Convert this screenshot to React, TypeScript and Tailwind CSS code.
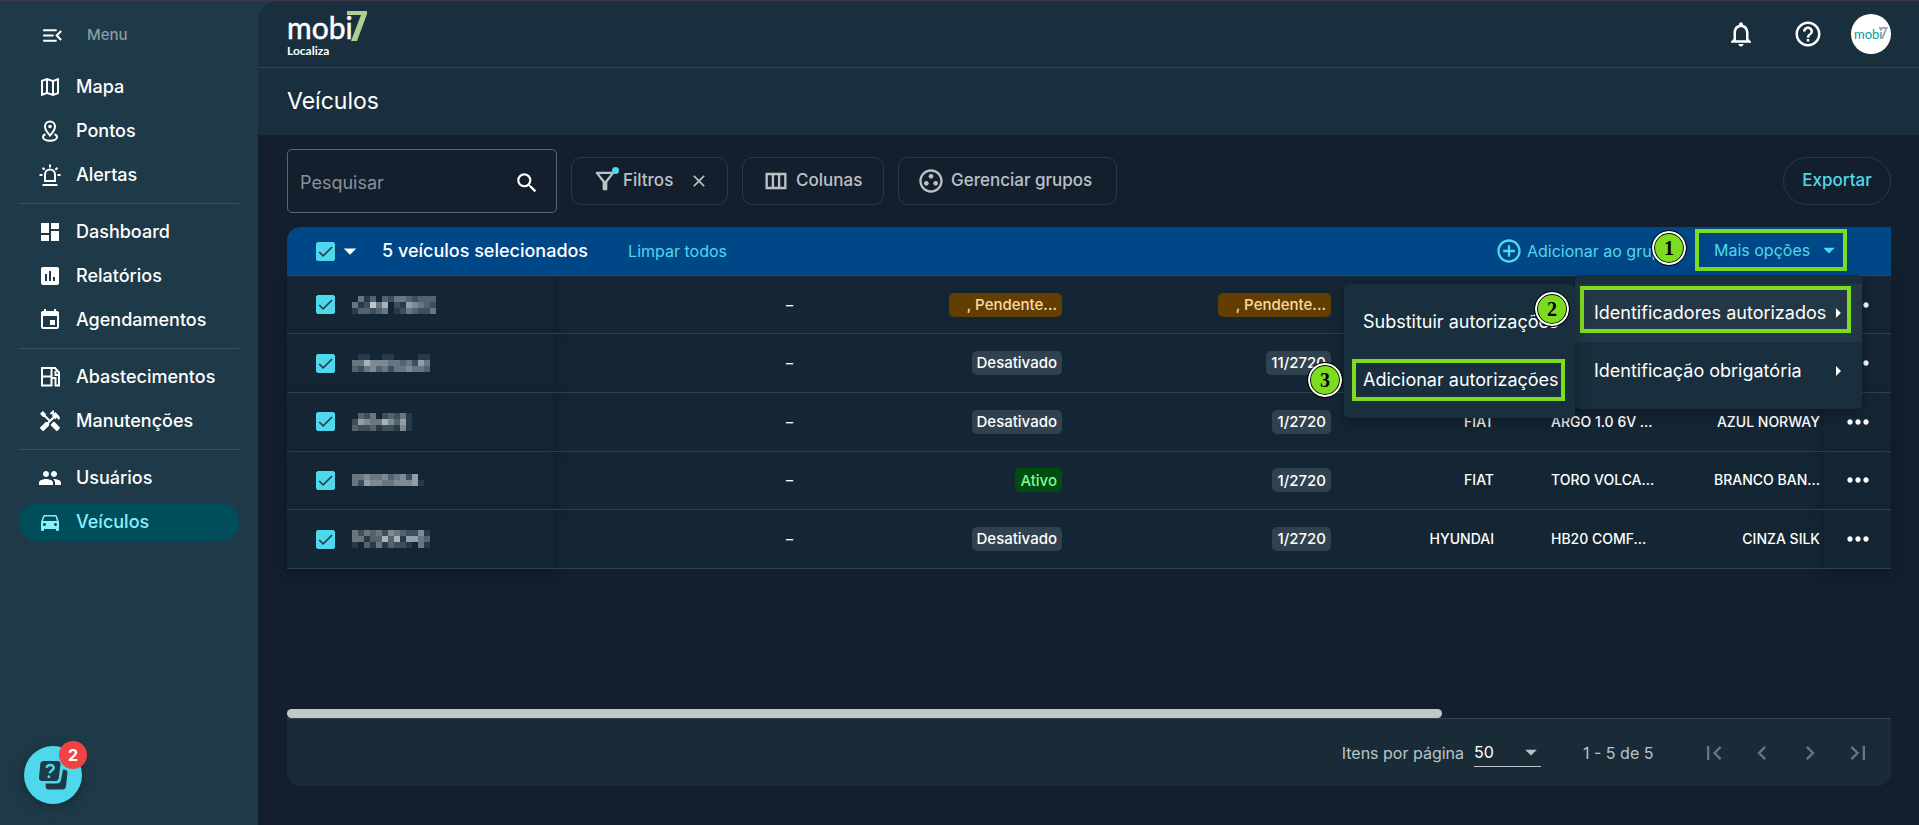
import { useState, type ReactNode } from 'react'
import type { IconType } from 'react-icons'
import {
  MdAddCircleOutline, MdArrowDropDown, MdArrowRight, MdCheck, MdChevronLeft, MdChevronRight, MdClose,
  MdDashboard, MdDirectionsCar, MdEvent, MdFirstPage, MdHandyman, MdHelpOutline, MdInsertChart, MdLastPage,
  MdMenuOpen, MdMoreHoriz, MdNotificationsNone, MdOutlineFilterAlt, MdOutlineGroupWork, MdOutlineMap,
  MdOutlineViewColumn, MdPeople, MdSearch,
} from 'react-icons/md'

type Icon = IconType | (() => ReactNode)

function PinIcon() {
  return (
    <svg viewBox="0 0 24 24" className="size-6" fill="none" stroke="currentColor" strokeWidth="2">
      <path d="M12 16.5C8.8 13 7 10.300 7 7.500a5 5 0 0 1 10 0c0 2.800-1.800 5.500-5 9Z" />
      <circle cx="12" cy="7.500" r="1.800" fill="currentColor" stroke="none" />
      <path d="M7.500 15.200C5.800 15.800 5 16.600 5 18c0 2.200 3 3.800 7 3.800s7-1.600 7-3.800c0-1.400-.8-2.200-2.500-2.800" />
    </svg>
  )
}

function SirenIcon() {
  return (
    <svg viewBox="0 0 24 24" className="size-6" fill="none" stroke="currentColor" strokeWidth="2">
      <path d="M7 18v-6.500a5 5 0 0 1 10 0V18ZM4.500 22h15M12 1.500v3M1.500 12h3M19.500 12h3M4.600 4.800l2 2M19.400 4.800l-2 2" />
    </svg>
  )
}

function FuelIcon() {
  return (
    <svg viewBox="0 0 24 24" className="size-6" fill="none" stroke="currentColor" strokeWidth="2">
      <path d="M4 3h9.500v17.500H4ZM4 11.500h9.500M13.500 3h3.500L21 7.500v13h-3.500V13h-4M17.500 6v4h3" />
    </svg>
  )
}

const NAV: { label: string; icon: Icon; active?: boolean }[][] = [
  [
    { label: 'Mapa', icon: MdOutlineMap },
    { label: 'Pontos', icon: PinIcon },
    { label: 'Alertas', icon: SirenIcon },
  ],
  [
    { label: 'Dashboard', icon: MdDashboard },
    { label: 'Relatórios', icon: MdInsertChart },
    { label: 'Agendamentos', icon: MdEvent },
  ],
  [
    { label: 'Abastecimentos', icon: FuelIcon },
    { label: 'Manutenções', icon: MdHandyman },
  ],
  [
    { label: 'Usuários', icon: MdPeople },
    { label: 'Veículos', icon: MdDirectionsCar, active: true },
  ],
]

// masked plates: one digit per block, 0 = clear, 9 = brightest
const VEHICLES = [
  { mask: ['04130324432333', '41284702165432', '13323401243224'], status: ', Pendente...', hours: ', Pendente...', brand: '', model: '', color: '' },
  { mask: ['0110011000011', '4475554434264', '3245342445443'], status: 'Desativado', hours: '11/2720', brand: '', model: '', color: '' },
  { mask: ['0324023241', '2654475361', '3223122151'], status: 'Desativado', hours: '1/2720', brand: 'FIAT', model: 'ARGO 1.0 6V ...', color: 'AZUL NORWAY' },
  { mask: ['445445345260', '426554455561'], status: 'Ativo', hours: '1/2720', brand: 'FIAT', model: 'TORO VOLCA...', color: 'BRANCO BAN...' },
  { mask: ['4243425432251', '4413373716643', '1031413221041'], status: 'Desativado', hours: '1/2720', brand: 'HYUNDAI', model: 'HB20 COMF...', color: 'CINZA SILK' },
]

const BADGE: Record<string, string> = {
  Ativo: 'bg-[#004d12] text-[#86f59b] px-[5px]',
  Desativado: 'bg-[#30414f] text-white px-[5px]',
  ', Pendente...': 'bg-[#623f00] text-[#ffd9a0] pl-[18px] pr-[5px]',
}

function Badge({ text }: { text: string }) {
  return (
    <span className={`inline-flex h-6 items-center rounded-[5px] text-[15px] font-medium ${BADGE[text] ?? 'bg-[#30414f] px-[5px] text-white'}`}>
      {text}
    </span>
  )
}

function Mask({ rows }: { rows: string[] }) {
  return (
    <svg width={rows[0].length * 6} height={rows.length * 6} shapeRendering="crispEdges" className="fill-[#d3dbe0]">
      {rows.map((row, y) =>
        [...row].map((level, x) => (
          <rect key={`${x}-${y}`} x={x * 6} y={y * 6} width="6" height="6" opacity={Number(level) / 9} />
        ))
      )}
    </svg>
  )
}

function Check({ label }: { label: string }) {
  const [checked, setChecked] = useState(true)
  return (
    <span className="grid size-[19px] shrink-0">
      <input
        type="checkbox"
        aria-label={label}
        checked={checked}
        onChange={(e) => setChecked(e.target.checked)}
        className="col-start-1 row-start-1 size-[19px] appearance-none rounded-xs border border-[#4fd8ec] checked:bg-[#4fd8ec]"
      />
      {checked && <MdCheck className="pointer-events-none col-start-1 row-start-1 size-[19px] text-[#2a3a45]" />}
    </span>
  )
}

function Step({ n, className }: { n: number; className: string }) {
  return (
    <span className={`absolute z-30 flex size-[34px] items-center justify-center rounded-full border-2 border-white bg-[#7ddc1f] font-['Liberation_Serif',serif] text-xl font-bold text-black outline-1 outline-black ring-1 ring-black ring-inset ${className}`}>
      {n}
    </span>
  )
}

function Logo() {
  return (
    <svg width="84" height="52" viewBox="0 0 84 52" role="img" aria-label="mobi7 Localiza" className="font-['Lato',sans-serif]">
      <text x="0" y="31" fontSize="30" fill="#fff" stroke="#fff" strokeWidth="0.5">mobi</text>
      <path d="M60 3h20v3L70 33h-6L74 7H60Z" fill="#b0cd92" />
      <text x="0" y="47" fontSize="12" fontWeight="700" fill="#fff">Localiza</text>
    </svg>
  )
}

function Sidebar() {
  return (
    <aside className="flex w-[258px] shrink-0 flex-col bg-[#1e3a48] px-[19px]">
      <button className="mt-3 flex h-11 items-center gap-[22px] pl-[21px] text-[15px] font-medium text-[#8c9ba3]">
        <MdMenuOpen className="size-[25px] text-white" />
        Menu
      </button>
      <nav className="mt-[2px] divide-y divide-[#3a5461]">
        {NAV.map((group, i) => (
          <ul key={i} className="flex flex-col gap-[6px] py-[9px]">
            {group.map(({ label, icon: NavIcon, active }) => (
              <li key={label}>
                <a
                  href="#"
                  className={`flex h-[38px] items-center gap-[14px] rounded-full pl-[19px] text-lg font-medium ${active ? 'bg-[#004e59] text-[#8aeffd]' : 'text-white'}`}
                >
                  <NavIcon className="size-6 shrink-0" />
                  {label}
                </a>
              </li>
            ))}
          </ul>
        ))}
      </nav>
      <button aria-label="Ajuda" className="relative mt-auto mb-[21px] ml-[5px] flex size-[58px] items-center justify-center rounded-full bg-[#4fd8ec] shadow-[0_2px_14px_rgba(0,0,0,0.3)]">
        <svg viewBox="0 0 30 30" className="size-[30px]" fill="#1e3a48">
          <path d="M5.500 1h14a3 3 0 0 1 3 3.400l-1.700 13a4 4 0 0 1-4 3.600H4a3 3 0 0 1-3-3.400l1.300-13A3.500 3.500 0 0 1 5.500 1Z" />
          <path d="M25 9.500l2 .3a3 3 0 0 1 2.400 3.200l-1.300 13a4 4 0 0 1-4 3.500H10.500A3 3 0 0 1 7.700 26v-2.500h10.500a5 5 0 0 0 5-4.500Z" />
          <path d="M8.500 7.800c.5-2 2-2.800 3.800-2.800 2.200 0 3.700 1.200 3.400 3-.4 2.500-3.700 2.500-4.100 5.200M11 15.500l-.3 2.500" fill="none" stroke="#4fd8ec" strokeWidth="2.500" />
        </svg>
        <span className="absolute -top-[5px] -right-[5px] flex size-7 items-center justify-center rounded-full bg-[#f04444] text-base font-bold text-white">2</span>
      </button>
    </aside>
  )
}

function Toolbar() {
  const button = 'flex h-12 items-center rounded-[10px] border border-[#2b3846] text-[17px] font-medium text-[#bcc1c6]'
  return (
    <div className="flex items-center gap-[14px]">
      <label className="flex h-16 w-[270px] items-center rounded-[5px] border border-[#5c6570] pt-1 pr-4 pl-3">
        <input aria-label="Pesquisar" placeholder="Pesquisar" className="min-w-0 flex-1 bg-transparent text-lg text-white outline-none placeholder:text-[#8b9097]" />
        <MdSearch className="size-[26px] text-white" />
      </label>
      <button className={`${button} w-[157px] gap-1 pl-[19px]`}>
        <span className="relative">
          <MdOutlineFilterAlt className="size-7" />
          <span className="absolute top-0 right-0 size-[7px] rounded-full bg-[#4fd8ec]" />
        </span>
        Filtros
        <MdClose className="ml-3 size-5" />
      </button>
      <button className={`${button} w-[142px] gap-[6px] pl-[19px]`}>
        <MdOutlineViewColumn className="size-7" />
        Colunas
      </button>
      <button className={`${button} w-[219px] gap-[6px] pl-[18px]`}>
        <MdOutlineGroupWork className="size-7" />
        Gerenciar grupos
      </button>
      <button className="ml-auto h-12 w-[108px] rounded-full border border-[#2b3846] text-[17px] font-medium text-[#4fd8ec]">Exportar</button>
    </div>
  )
}

function OptionsMenu() {
  const item = 'flex h-[58px] w-full items-center justify-between pr-3 pl-[19px] text-left text-lg whitespace-nowrap text-white'
  return (
    <div className="relative mr-11 mb-[3px]">
      <button className="flex h-[42px] w-[152px] items-center justify-between border-4 border-[#7ddc1f] pl-[15px] text-base whitespace-nowrap text-[#4fd8ec]">
        Mais opções
        <MdArrowDropDown className="size-7" />
      </button>
      <Step n={1} className="top-[2px] -left-[43px]" />

      <ul role="menu" className="absolute top-[46px] -right-[15px] z-20 w-[287px] rounded-[5px] bg-[#1a2f3d] py-[9px] shadow-[0_4px_12px_rgba(0,0,0,0.35)]">
        <li role="none" className="relative">
          <button role="menuitem" aria-expanded="true" className={`${item} bg-[#243746]`}>
            Identificadores autorizados
            <MdArrowRight className="size-6" />
          </button>
          <span className="pointer-events-none absolute top-[2px] right-[11px] left-[5px] h-[47px] border-4 border-[#7ddc1f]" />
          <Step n={2} className="top-2 -left-10" />
          <ul role="menu" className="absolute top-0 right-full w-[231px] rounded-[5px] bg-[#1a2f3d] py-[9px] shadow-[0_4px_12px_rgba(0,0,0,0.35)]">
            <li role="none">
              <button role="menuitem" className={item}>Substituir autorizações</button>
            </li>
            <li role="none" className="relative">
              <button role="menuitem" className={item}>Adicionar autorizações</button>
              <span className="pointer-events-none absolute top-2 right-[10px] left-2 h-[42px] border-4 border-[#7ddc1f]" />
              <Step n={3} className="top-3 -left-9" />
            </li>
          </ul>
        </li>
        <li role="none">
          <button role="menuitem" className={item}>
            Identificação obrigatória
            <MdArrowRight className="size-6" />
          </button>
        </li>
      </ul>
    </div>
  )
}

function VehicleTable() {
  const stuck = 'bg-[#142634] shadow-[0_3px_14px_rgba(0,0,0,0.25)]'
  return (
    <table className="h-[293px] w-full table-fixed bg-[#142634] text-right text-sm font-medium text-white">
      <colgroup>
        <col className="w-[266px]" />
        <col className="w-[240px]" />
        <col className="w-[269px]" />
        <col className="w-[269px]" />
        <col className="w-[163px]" />
        <col className="w-[163px]" />
        <col className="w-[167px]" />
        <col className="w-[67px]" />
      </colgroup>
      <tbody>
        {VEHICLES.map((v, i) => (
          <tr key={i} className="border-b border-[#2e3f4d]">
            <td className={stuck}>
              <div className="flex items-center gap-[17px] pl-[29px]">
                <Check label={`Selecionar veículo ${i + 1}`} />
                <Mask rows={v.mask} />
              </div>
            </td>
            <td>–</td>
            <td><Badge text={v.status} /></td>
            <td><Badge text={v.hours} /></td>
            <td>{v.brand}</td>
            <td><span className="inline-block w-[106px] text-left whitespace-nowrap">{v.model}</span></td>
            <td className="pr-1 whitespace-nowrap">{v.color}</td>
            <td className={stuck}>
              <button aria-label="Ações" className="mx-auto block">
                <MdMoreHoriz className="size-8" />
              </button>
            </td>
          </tr>
        ))}
      </tbody>
    </table>
  )
}

function Paginator() {
  return (
    <footer className="flex h-[68px] items-center justify-end rounded-b-[14px] border-t border-[#33444f] bg-[#1a2b38] pr-[19px] text-base text-[#bcc3c8]">
      <label htmlFor="page-size">Itens por página</label>
      <span className="relative ml-[10px] flex w-[67px] items-center border-b border-[#bcc3c8]">
        <select id="page-size" className="w-full appearance-none bg-transparent py-[2px] text-white outline-none">
          <option>50</option>
        </select>
        <MdArrowDropDown className="pointer-events-none absolute -right-1 size-7" />
      </span>
      <span className="ml-[42px] w-[68px] whitespace-nowrap">1 - 5 de 5</span>
      <span className="ml-[49px] flex gap-5 text-[#68757f]">
        <button aria-label="Primeira página"><MdFirstPage className="size-7" /></button>
        <button aria-label="Página anterior"><MdChevronLeft className="size-7" /></button>
        <button aria-label="Próxima página"><MdChevronRight className="size-7" /></button>
        <button aria-label="Última página"><MdLastPage className="size-7" /></button>
      </span>
    </footer>
  )
}

export default function App() {
  return (
    <div className="flex min-h-screen border-t border-[#3d3548] bg-[#1e3a48] font-['Inter',sans-serif]">
      <Sidebar />
      <div className="flex min-w-0 flex-1 flex-col rounded-tl-[22px] bg-[#141f2d]">
        <header className="flex h-[67px] items-center rounded-tl-[22px] border-b border-[#36454f] bg-[#1a2f3d] pr-7 pl-[29px]">
          <Logo />
          <div className="ml-auto flex items-center text-white">
            <button aria-label="Notificações"><MdNotificationsNone className="size-[30px]" /></button>
            <button aria-label="Ajuda" className="ml-[37px]"><MdHelpOutline className="size-[30px]" /></button>
            <button aria-label="Conta" className="ml-7 flex size-10 items-center justify-center rounded-full bg-white">
              <svg width="36" height="20" viewBox="0 0 36 20" className="font-['Lato',sans-serif]">
                <text x="1" y="15" fontSize="13" fill="#0a98a8">mobi</text>
                <path d="M26 3h9l-5 12h-2l4-10h-6Z" fill="#a3a8ab" />
              </svg>
            </button>
          </div>
        </header>
        <div className="flex h-[67px] items-center bg-[#1a2f3d] pl-[29px]">
          <h1 className="text-[23px] text-white">Veículos</h1>
        </div>

        <main className="flex flex-1 flex-col pt-[14px] pr-7 pb-[39px] pl-[29px]">
          <Toolbar />
          <div className="relative z-10 mt-[14px] flex h-[49px] items-center rounded-tl-[14px] rounded-tr-xs border-b border-[#2e4a63] bg-[#004788]">
            <div className="flex items-center pl-[29px]">
              <Check label="Selecionar todos" />
              <button aria-label="Opções de seleção" className="text-white"><MdArrowDropDown className="size-[30px]" /></button>
            </div>
            <span className="ml-[17px] text-lg font-medium text-white">5 veículos selecionados</span>
            <button className="ml-10 text-base text-[#4fd8ec]">Limpar todos</button>
            <button className="mr-6 ml-auto flex items-center gap-1 text-base text-[#4fd8ec]">
              <MdAddCircleOutline className="size-7" />
              Adicionar ao grupo
            </button>
            <OptionsMenu />
          </div>
          <VehicleTable />
          <div className="mt-auto h-[9px] w-[72%] rounded-full bg-[#c1c7cb]" />
          <Paginator />
        </main>
      </div>
    </div>
  )
}
